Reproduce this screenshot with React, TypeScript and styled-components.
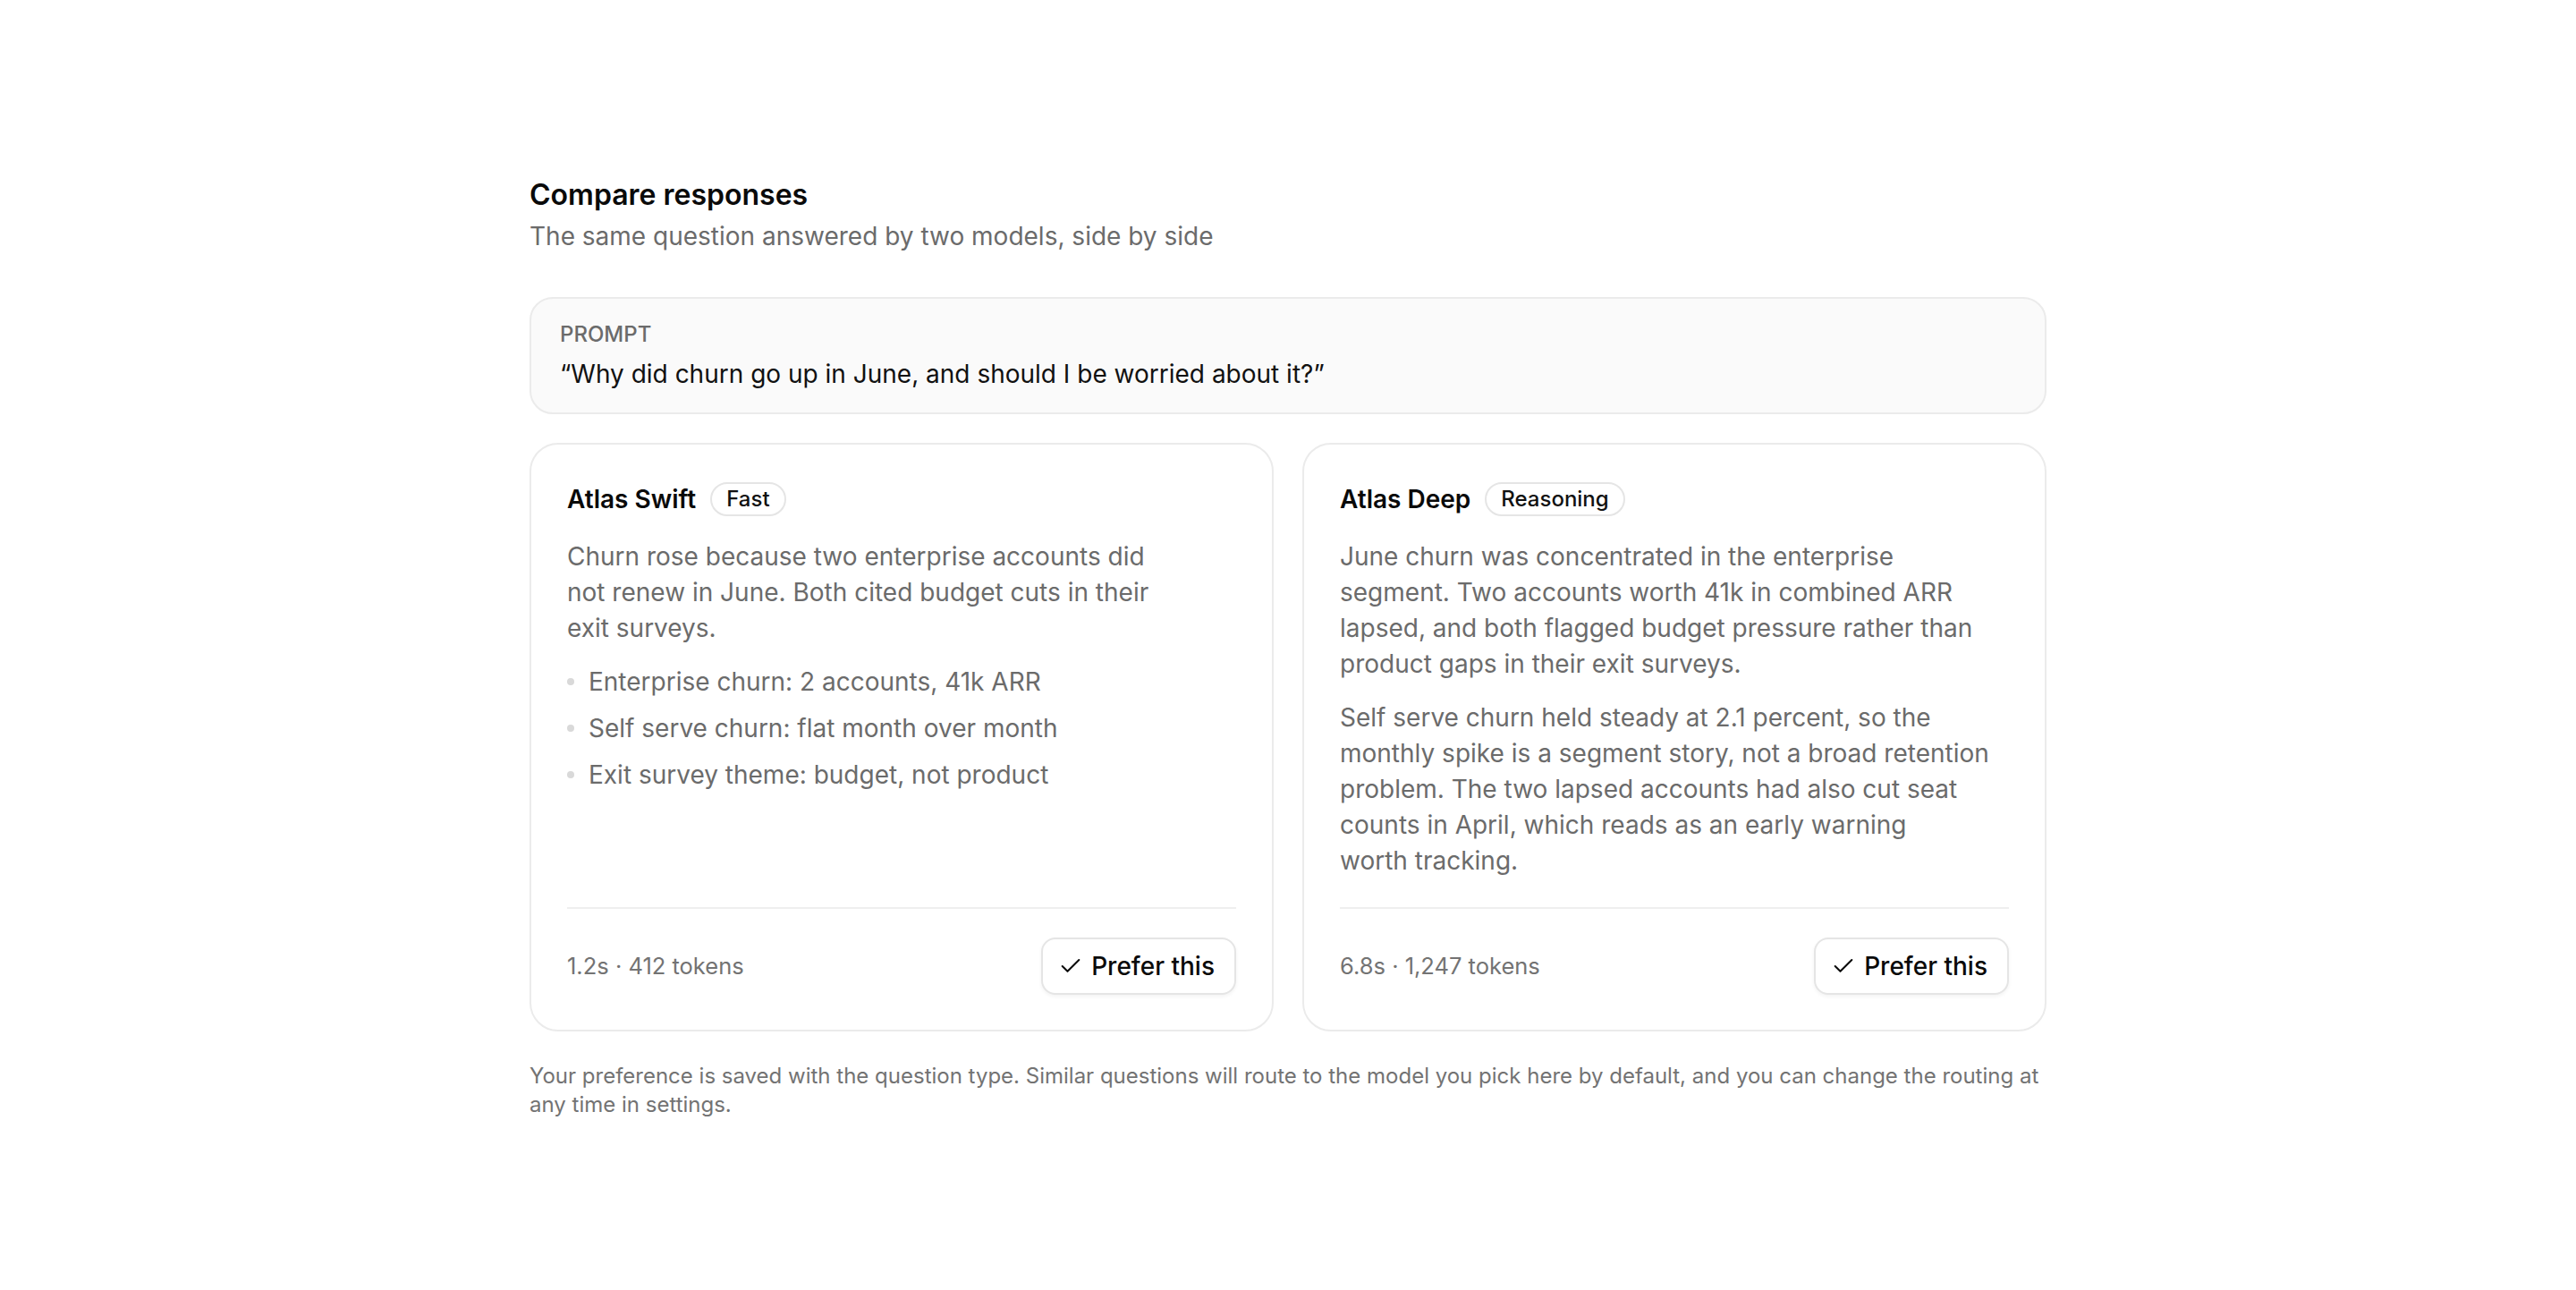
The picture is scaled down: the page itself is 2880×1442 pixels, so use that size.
import { FC } from 'react';
import styled, { createGlobalStyle } from 'styled-components';
import { Check } from 'lucide-react';

const GlobalStyle = createGlobalStyle`
    * {
        box-sizing: border-box;
    }

    body {
        margin: 0;
        background: #ffffff;
        font-family: Inter, 'Noto Sans', 'Liberation Sans', sans-serif;
        color: #111111;
        -webkit-font-smoothing: antialiased;
    }
`;

const Page = styled.main`
    min-height: 100vh;
    padding-top: 6px;
    display: flex;
    align-items: center;
    justify-content: center;
`;

const Wrapper = styled.section`
    width: 1696px;
    display: flex;
    flex-direction: column;
`;

const Heading = styled.header`
    display: flex;
    flex-direction: column;
    gap: 6px;
    margin-bottom: 48px;
`;

const Title = styled.h1`
    margin: 0;
    font-size: 32px;
    line-height: 40px;
    font-weight: 600;
    color: #0a0a0a;
`;

const Subtitle = styled.p`
    margin: 0;
    font-size: 28px;
    line-height: 40px;
    color: #6b6b6b;
`;

const PromptBox = styled.div`
    display: flex;
    flex-direction: column;
    gap: 8px;
    padding: 24px 32px 23px;
    background: #fafafa;
    border: 2px solid #ebebeb;
    border-radius: 26px;
    margin-bottom: 32px;
`;

const PromptLabel = styled.span`
    font-size: 24px;
    line-height: 32px;
    font-weight: 500;
    color: #6b6b6b;
    text-transform: uppercase;
`;

const PromptText = styled.p`
    margin: 0;
    font-size: 28px;
    line-height: 40px;
    color: #111111;
`;

const CardGrid = styled.div`
    display: grid;
    grid-template-columns: 1fr 1fr;
    gap: 32px;
    margin-bottom: 34px;
`;

const Card = styled.article`
    display: flex;
    flex-direction: column;
    padding: 41px 40px 39px;
    border: 2px solid #ebebeb;
    border-radius: 32px;
    background: #ffffff;
`;

const CardHeader = styled.div`
    display: flex;
    align-items: center;
    gap: 16px;
    height: 40px;
    margin-bottom: 24px;
`;

const ModelName = styled.h2`
    margin: 0;
    font-size: 28px;
    line-height: 40px;
    font-weight: 600;
    color: #0a0a0a;
`;

const Badge = styled.span`
    display: inline-flex;
    align-items: center;
    height: 38px;
    padding: 0 16px;
    border: 2px solid #e5e5e5;
    border-radius: 999px;
    font-size: 24px;
    font-weight: 500;
    color: #111111;
`;

const Body = styled.div`
    display: flex;
    flex-direction: column;
    gap: 20px;
    font-size: 28px;
    line-height: 40px;
    color: #6b6b6b;
    margin-bottom: 32px;
`;

const Paragraph = styled.p`
    margin: 0;
    text-wrap: pretty;
`;

const List = styled.ul`
    margin: 0;
    padding: 0;
    list-style: none;
    display: flex;
    flex-direction: column;
    gap: 12px;
`;

const Item = styled.li`
    display: flex;
    align-items: center;
    gap: 16px;

    &::before {
        content: '';
        flex: none;
        width: 8px;
        height: 8px;
        border-radius: 50%;
        background: #d9d9d9;
    }
`;

const Footer = styled.div`
    margin-top: auto;
    padding-top: 32px;
    border-top: 2px solid #efefef;
    display: flex;
    align-items: center;
    justify-content: space-between;
`;

const Meta = styled.span`
    font-size: 25.5px;
    line-height: 32px;
    color: #737373;
`;

const PreferButton = styled.button`
    display: inline-flex;
    align-items: center;
    gap: 9px;
    height: 64px;
    padding: 0 22px 0 17px;
    border: 2px solid #e5e5e5;
    border-radius: 16px;
    background: #ffffff;
    box-shadow: 0 2px 4px rgba(0, 0, 0, 0.05);
    font-family: inherit;
    font-size: 28px;
    font-weight: 500;
    color: #0a0a0a;
    cursor: pointer;
`;

const Footnote = styled.p`
    margin: 0;
    font-size: 24px;
    line-height: 32px;
    color: #737373;
`;

interface IResponse {
    name: string;
    badge: string;
    paragraphs: string[];
    bullets?: string[];
    meta: string;
}

const responses: IResponse[] = [
    {
        name: 'Atlas Swift',
        badge: 'Fast',
        paragraphs: [
            'Churn rose because two enterprise accounts did not renew in June. Both cited budget cuts in their exit surveys.',
        ],
        bullets: [
            'Enterprise churn: 2 accounts, 41k ARR',
            'Self serve churn: flat month over month',
            'Exit survey theme: budget, not product',
        ],
        meta: '1.2s · 412 tokens',
    },
    {
        name: 'Atlas Deep',
        badge: 'Reasoning',
        paragraphs: [
            'June churn was concentrated in the enterprise segment. Two accounts worth 41k in combined ARR lapsed, and both flagged budget pressure rather than product gaps in their exit surveys.',
            'Self serve churn held steady at 2.1 percent, so the monthly spike is a segment story, not a broad retention problem. The two lapsed accounts had also cut seat counts in April, which reads as an early warning worth tracking.',
        ],
        meta: '6.8s · 1,247 tokens',
    },
];

const ResponseCard: FC<{ response: IResponse }> = ({ response }) => (
    <Card>
        <CardHeader>
            <ModelName>{response.name}</ModelName>
            <Badge>{response.badge}</Badge>
        </CardHeader>
        <Body>
            {response.paragraphs.map(text => (
                <Paragraph key={text}>{text}</Paragraph>
            ))}
            {response.bullets && (
                <List>
                    {response.bullets.map(b => (
                        <Item key={b}>{b}</Item>
                    ))}
                </List>
            )}
        </Body>
        <Footer>
            <Meta>{response.meta}</Meta>
            <PreferButton type='button'>
                <Check size={28} strokeWidth={1.75} />
                Prefer this
            </PreferButton>
        </Footer>
    </Card>
);

const App: FC = () => {
    return (
        <>
            <GlobalStyle />
            <Page>
                <Wrapper>
                    <Heading>
                        <Title>Compare responses</Title>
                        <Subtitle>The same question answered by two models, side by side</Subtitle>
                    </Heading>
                    <PromptBox>
                        <PromptLabel>Prompt</PromptLabel>
                        <PromptText>
                            “Why did churn go up in June, and should I be worried about it?”
                        </PromptText>
                    </PromptBox>
                    <CardGrid>
                        {responses.map(r => (
                            <ResponseCard key={r.name} response={r} />
                        ))}
                    </CardGrid>
                    <Footnote>
                        Your preference is saved with the question type. Similar questions will
                        route to the model you pick here by default, and you can change the routing
                        at any time in settings.
                    </Footnote>
                </Wrapper>
            </Page>
        </>
    );
};

export default App;
